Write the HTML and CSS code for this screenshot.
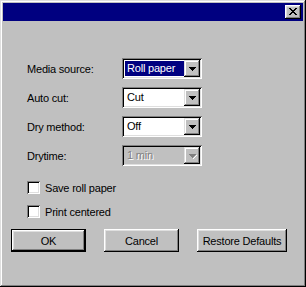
FILE: index.html
```html
<!DOCTYPE html>
<html lang="en">
<head>
    <meta charset="UTF-8">
    <title>Media settings</title>
    <link rel="stylesheet" href="styles.css">
</head>
<body>

<div class="window">
    <!-- Titelleiste -->
    <div class="titlebar">
        <div class="close-btn">
            <svg width="8" height="7" viewBox="0 0 8 7" shape-rendering="crispEdges">
                <path fill="#000" d="M0 0h2v1H0zM6 0h2v1H6zM1 1h2v1H1zM5 1h2v1H5zM2 2h4v1H2zM3 3h2v1H3zM2 4h4v1H2zM1 5h2v1H1zM5 5h2v1H5zM0 6h2v1H0zM6 6h2v1H6z"/>
            </svg>
        </div>
    </div>

    <div class="content">
        <!-- Auswahlfelder -->
        <div class="fields">
            <div class="field-row">
                <span class="field-label">Media source:</span>
                <div class="combo">
                    <span class="combo-value selected">Roll paper</span>
                    <span class="combo-arrow"><svg width="7" height="4" viewBox="0 0 7 4" shape-rendering="crispEdges"><path fill="#000" d="M0 0h7v1H0zM1 1h5v1H1zM2 2h3v1H2zM3 3h1v1H3z"/></svg></span>
                </div>
            </div>
            <div class="field-row">
                <span class="field-label">Auto cut:</span>
                <div class="combo">
                    <span class="combo-value">Cut</span>
                    <span class="combo-arrow"><svg width="7" height="4" viewBox="0 0 7 4" shape-rendering="crispEdges"><path fill="#000" d="M0 0h7v1H0zM1 1h5v1H1zM2 2h3v1H2zM3 3h1v1H3z"/></svg></span>
                </div>
            </div>
            <div class="field-row">
                <span class="field-label">Dry method:</span>
                <div class="combo">
                    <span class="combo-value">Off</span>
                    <span class="combo-arrow"><svg width="7" height="4" viewBox="0 0 7 4" shape-rendering="crispEdges"><path fill="#000" d="M0 0h7v1H0zM1 1h5v1H1zM2 2h3v1H2zM3 3h1v1H3z"/></svg></span>
                </div>
            </div>
            <div class="field-row">
                <span class="field-label">Drytime:</span>
                <div class="combo disabled">
                    <span class="combo-value">1 min</span>
                    <span class="combo-arrow"><svg width="8" height="5" viewBox="0 0 8 5" shape-rendering="crispEdges"><path fill="#fff" d="M7 1h1v1H7zM6 2h1v1H6zM5 3h1v1H5zM4 4h1v1H4z"/><path fill="#808080" d="M0 0h7v1H0zM1 1h5v1H1zM2 2h3v1H2zM3 3h1v1H3z"/></svg></span>
                </div>
            </div>
        </div>

        <!-- Optionen -->
        <div class="checks">
            <div class="check-row">
                <span class="checkbox"></span>
                <span>Save roll paper</span>
            </div>
            <div class="check-row">
                <span class="checkbox"></span>
                <span>Print centered</span>
            </div>
        </div>

        <!-- Schaltflaechen -->
        <div class="button-row">
            <div class="btn default">OK</div>
            <div class="btn">Cancel</div>
            <div class="btn wide">Restore Defaults</div>
        </div>
    </div>
</div>

</body>
</html>
```

FILE: styles.css
```css
body {
    margin: 0;
    padding: 0;
    font-family: "Liberation Sans", Arial, sans-serif;
    font-size: 11px;
    letter-spacing: -0.2px;
    color: #000;
    background: #c0c0c0;
}

.window {
    box-sizing: border-box;
    width: 306px;
    height: 287px;
    padding: 3px;
    background: #c0c0c0;
    box-shadow: inset -1px -1px #000, inset 1px 1px #dfdfdf,
                inset -2px -2px #808080, inset 2px 2px #fff;
    display: flex;
    flex-direction: column;
}

.titlebar {
    height: 18px;
    background: #000080;
    display: flex;
    justify-content: flex-end;
    align-items: center;
    padding-right: 2px;
}

.close-btn {
    box-sizing: border-box;
    width: 16px;
    height: 14px;
    padding: 3px 0 0 4px;
    background: #c0c0c0;
    box-shadow: inset -1px -1px #000, inset 1px 1px #fff,
                inset -2px -2px #808080, inset 2px 2px #dfdfdf;
}

.close-btn svg {
    display: block;
}

.content {
    padding: 37px 0 0 8px;
}

.fields {
    padding-left: 16px;
}

.field-row {
    display: flex;
    align-items: center;
    height: 21px;
    margin-bottom: 8px;
}

.field-label {
    width: 95px;
}

/* Kombinationsfeld */
.combo {
    box-sizing: border-box;
    width: 80px;
    height: 21px;
    padding: 2px;
    display: flex;
    background: #fff;
    box-shadow: inset 1px 1px #808080, inset -1px -1px #fff,
                inset 2px 2px #000, inset -2px -2px #dfdfdf;
}

.combo-value {
    flex: 1;
    margin: 1px 0 1px 1px;
    padding-left: 2px;
    line-height: 15px;
}

.combo-value.selected {
    background: #000080;
    color: #fff;
}

.combo-arrow {
    box-sizing: border-box;
    width: 16px;
    height: 17px;
    display: flex;
    justify-content: center;
    align-items: center;
    padding-top: 1px;
    background: #c0c0c0;
    box-shadow: inset -1px -1px #000, inset 1px 1px #dfdfdf,
                inset -2px -2px #808080, inset 2px 2px #fff;
}

.combo.disabled {
    background: #c0c0c0;
}

.combo.disabled .combo-value {
    color: #808080;
    text-shadow: 1px 1px 0 #fff;
}

.combo.disabled .combo-arrow {
    padding-left: 1px;
}

/* Kontrollkaestchen */
.checks {
    padding: 7px 0 0 16px;
}

.check-row {
    display: flex;
    align-items: center;
    height: 13px;
    margin-bottom: 11px;
}

.checkbox {
    width: 13px;
    height: 13px;
    margin-right: 5px;
    background: #fff;
    box-shadow: inset 1px 1px #808080, inset -1px -1px #fff,
                inset 2px 2px #000, inset -2px -2px #dfdfdf;
}

.button-row {
    display: flex;
    gap: 18px;
    margin-top: 6px;
}

.btn {
    box-sizing: border-box;
    width: 75px;
    height: 23px;
    display: flex;
    justify-content: center;
    align-items: center;
    background: #c0c0c0;
    box-shadow: inset -1px -1px #000, inset 1px 1px #fff,
                inset -2px -2px #808080, inset 2px 2px #dfdfdf;
}

.btn.default {
    border: 1px solid #000;
}

.btn.wide {
    width: 90px;
}
```
